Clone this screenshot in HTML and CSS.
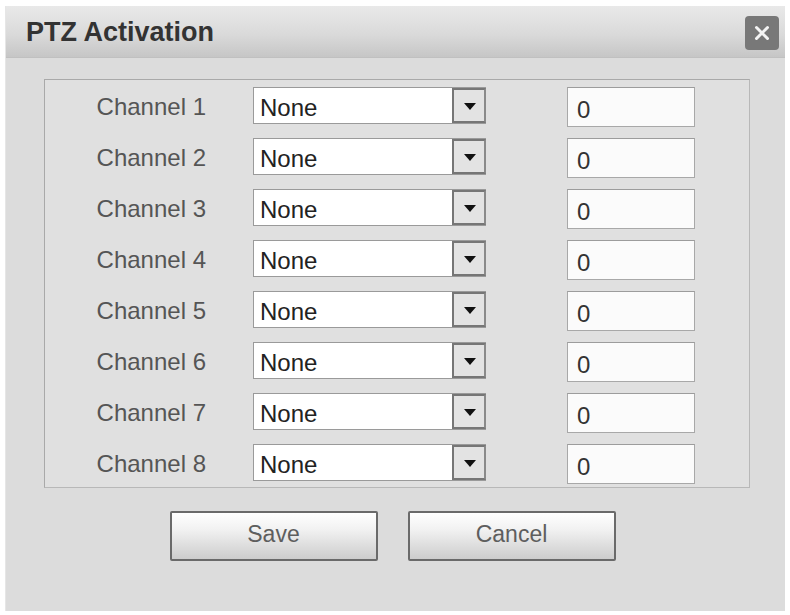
FILE: index.html
```html
<!DOCTYPE html>
<html lang="en">
<head>
  <meta charset="UTF-8">
  <title>PTZ Activation</title>
  <link rel="stylesheet" href="styles.css">
</head>
<body>

  <div class="dialog">
    <!-- Title bar -->
    <div class="dialog-title">
      <h2>PTZ Activation</h2>
      <button class="close-btn" type="button" aria-label="Close">
        <svg width="20" height="20" viewBox="0 0 20 20">
          <path d="M4.5 4.5 L15.5 15.5 M15.5 4.5 L4.5 15.5" stroke="#f4f4f4" stroke-width="3" stroke-linecap="round"/>
        </svg>
      </button>
    </div>

    <div class="dialog-body">
      <div class="channel-panel">
        <div class="channel-row">
          <label>Channel 1</label>
          <div class="fake-select"><span class="value">None</span><span class="arrow"></span></div>
          <input type="text" class="preset" value="0">
        </div>
        <div class="channel-row">
          <label>Channel 2</label>
          <div class="fake-select"><span class="value">None</span><span class="arrow"></span></div>
          <input type="text" class="preset" value="0">
        </div>
        <div class="channel-row">
          <label>Channel 3</label>
          <div class="fake-select"><span class="value">None</span><span class="arrow"></span></div>
          <input type="text" class="preset" value="0">
        </div>
        <div class="channel-row">
          <label>Channel 4</label>
          <div class="fake-select"><span class="value">None</span><span class="arrow"></span></div>
          <input type="text" class="preset" value="0">
        </div>
        <div class="channel-row">
          <label>Channel 5</label>
          <div class="fake-select"><span class="value">None</span><span class="arrow"></span></div>
          <input type="text" class="preset" value="0">
        </div>
        <div class="channel-row">
          <label>Channel 6</label>
          <div class="fake-select"><span class="value">None</span><span class="arrow"></span></div>
          <input type="text" class="preset" value="0">
        </div>
        <div class="channel-row">
          <label>Channel 7</label>
          <div class="fake-select"><span class="value">None</span><span class="arrow"></span></div>
          <input type="text" class="preset" value="0">
        </div>
        <div class="channel-row">
          <label>Channel 8</label>
          <div class="fake-select"><span class="value">None</span><span class="arrow"></span></div>
          <input type="text" class="preset" value="0">
        </div>
      </div>

      <div class="actions">
        <button type="button" class="btn">Save</button>
        <button type="button" class="btn">Cancel</button>
      </div>
    </div>
  </div>

</body>
</html>
```

FILE: styles.css
```css
* {
  box-sizing: border-box;
  margin: 0;
  padding: 0;
}

body {
  font-family: 'Liberation Sans', Arial, sans-serif;
  background: #fff;
  padding: 6px 5px 4px 5px;
  height: 615px;
  overflow: hidden;
}

.dialog {
  height: 605px;
  background: #dcdcdc;
  border-left: 1px solid #e6e6e6;
}

/* Title bar */
.dialog-title {
  height: 52px;
  display: flex;
  align-items: center;
  justify-content: space-between;
  padding: 0 6px 0 20px;
  background: linear-gradient(to bottom, #e9e9e9 0%, #dadada 55%, #c6c6c6 100%);
  border-bottom: 1px solid #c0c0c0;
}

.dialog-title h2 {
  font-size: 27px;
  font-weight: bold;
  color: #333;
  padding-top: 2px;
}

.close-btn {
  width: 34px;
  height: 34px;
  border: none;
  border-radius: 4px;
  background: #787878;
  display: flex;
  align-items: center;
  justify-content: center;
  margin-top: 2px;
}

.dialog-body {
  padding: 21px 35px 0 38px;
}

/* Channel list */
.channel-panel {
  background: #e0e0e0;
  border: 1px solid #a9a9a9;
  border-right-color: #b8b8b8;
  border-bottom-color: #b8b8b8;
  padding: 7px 0 4px 0;
  display: flex;
  flex-direction: column;
  gap: 12px;
}

.channel-row {
  display: grid;
  grid-template-columns: 163px 233px 128px;
  column-gap: 45px;
  align-items: center;
  height: 39px;
}

.channel-row .preset {
  margin-left: 36px;
}

.channel-row label {
  text-align: right;
  font-size: 24px;
  color: #555;
  padding-bottom: 1px;
  padding-right: 2px;
}

.fake-select {
  display: flex;
  height: 37px;
  align-self: start;
  background: #fff;
  border: 1px solid #9a9a9a;
  border-right: none;
}

.fake-select .value {
  flex: 1;
  font-size: 24px;
  color: #222;
  padding: 6px 0 0 6px;
}

.fake-select .arrow {
  width: 34px;
  height: 35px;
  background: #e3e3e3;
  border: 2px solid #767676;
  border-right-color: #8a8a8a;
  position: relative;
}

.fake-select .arrow::after {
  content: "";
  position: absolute;
  left: 10px;
  top: 13px;
  border-left: 6px solid transparent;
  border-right: 6px solid transparent;
  border-top: 7px solid #111;
}

.preset {
  width: 128px;
  height: 40px;
  border: 1px solid #a8a8a8;
  border-top-color: #9c9c9c;
  background: #fbfbfb;
  font-family: 'Liberation Sans', Arial, sans-serif;
  font-size: 24px;
  color: #333;
  padding: 6px 0 0 9px;
  outline: none;
}

/* Buttons */
.actions {
  display: flex;
  justify-content: center;
  gap: 30px;
  padding: 23px 9px 0 0;
}

.btn {
  width: 208px;
  height: 50px;
  border: 2px solid #6a6a6a;
  border-radius: 2px;
  background: linear-gradient(to bottom, #ffffff 0%, #f2f2f2 35%, #cdcdcd 100%);
  font-family: 'Liberation Sans', Arial, sans-serif;
  font-size: 23px;
  color: #5e5e5e;
  padding-bottom: 4px;
  cursor: pointer;
}
```
